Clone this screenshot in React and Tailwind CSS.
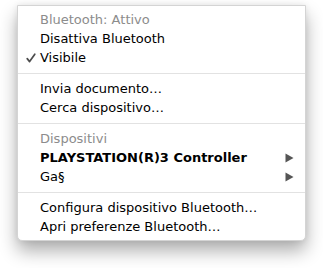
import React from "react";

const Arrow = () => (
  <svg width="9" height="10" viewBox="0 0 9 10" className="shrink-0">
    <polygon points="0.5,0.5 8.5,5 0.5,9.5" fill="#555555" />
  </svg>
);

const Check = () => (
  <svg width="10" height="10" viewBox="0 0 10 10" className="absolute left-[8px] top-[5px]">
    <path d="M1.2 5.6 L3.6 8.6 L8.8 1.2" fill="none" stroke="#4d4d4d" strokeWidth="1.7" strokeLinecap="round" strokeLinejoin="round" />
  </svg>
);

function Row({ children, gray, bold, check, arrow }) {
  return (
    <div
      className={`relative flex h-[19px] items-center pl-[22px] pr-[11px] text-[13px] leading-[19px] ${
        gray ? "text-[#8c8c8c]" : "text-black"
      } ${bold ? "font-bold" : ""}`}
    >
      {check && <Check />}
      <span className="flex-1 whitespace-nowrap">{children}</span>
      {arrow && <Arrow />}
    </div>
  );
}

const Sep = () => (
  <div className="flex h-[12px] items-center">
    <div className="h-px w-full bg-[#e2e2e2]" />
  </div>
);

export default function App() {
  return (
    <div className="h-[268px] w-[323px] bg-white pt-[5px] pl-[17px]" style={{ fontFamily: '"DejaVu Sans", sans-serif' }}>
      <div className="w-[289px] rounded-b-[5px] border border-[#d4d4d4] bg-white pt-[4px] pb-[4px] shadow-[0_10px_18px_rgba(0,0,0,0.32),0_0_6px_rgba(0,0,0,0.08)]">
        <Row gray>Bluetooth: Attivo</Row>
        <Row>Disattiva Bluetooth</Row>
        <Row check>Visibile</Row>
        <Sep />
        <Row>Invia documento…</Row>
        <Row>Cerca dispositivo…</Row>
        <Sep />
        <Row gray>Dispositivi</Row>
        <Row bold arrow>PLAYSTATION(R)3 Controller</Row>
        <Row arrow>Ga§</Row>
        <Sep />
        <Row>Configura dispositivo Bluetooth…</Row>
        <Row>Apri preferenze Bluetooth…</Row>
      </div>
    </div>
  );
}
